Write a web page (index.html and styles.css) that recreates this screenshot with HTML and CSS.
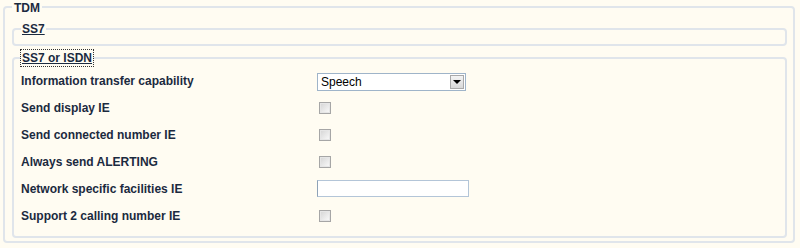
FILE: index.html
```html
<!DOCTYPE html>
<html lang="en">
  <head>
    <meta charset="UTF-8" />
    <title>TDM</title>
    <link rel="stylesheet" href="styles.css">
  </head>
  <body>
    <fieldset class="group">
      <legend class="group-title">TDM</legend>

      <fieldset class="section">
        <legend><a href="#" class="section-link">SS7</a></legend>
      </fieldset>

      <fieldset class="section">
        <legend><a href="#" class="section-link focused">SS7 or ISDN</a></legend>
        <div class="form-grid">
          <label class="field-label">Information transfer capability</label>
          <div class="field">
            <div class="select">
              <span class="select-value">Speech</span>
              <span class="select-btn"><span class="arrow"></span></span>
            </div>
          </div>

          <label class="field-label">Send display IE</label>
          <div class="field"><input type="checkbox" class="check" /></div>

          <label class="field-label">Send connected number IE</label>
          <div class="field"><input type="checkbox" class="check" /></div>

          <label class="field-label">Always send ALERTING</label>
          <div class="field"><input type="checkbox" class="check" /></div>

          <label class="field-label">Network specific facilities IE</label>
          <div class="field"><input type="text" class="text-input" /></div>

          <label class="field-label">Support 2 calling number IE</label>
          <div class="field"><input type="checkbox" class="check" /></div>
        </div>
      </fieldset>
    </fieldset>
  </body>
</html>
```

FILE: styles.css
```css
body {
  margin: 0;
  background: #fffcf2;
  font-family: "Liberation Sans", Arial, sans-serif;
  font-size: 12px;
  color: #1b2a3f;
}

fieldset {
  border: 2px solid #e0e5eb;
  border-radius: 4px;
  min-width: 0;
}

.group {
  margin: -1px 5px 5px 3px;
  padding: 6px 6px 4px 7px;
  height: 244px;
  box-sizing: border-box;
}

.group-title {
  padding: 3px 2px 0;
  font-weight: bold;
  line-height: 13px;
  color: #1b2a3f;
}

.section {
  margin: 0 0 4px 0;
  padding: 0 6px 7px 6px;
}

.section legend {
  padding: 0;
  margin-left: 1px;
  line-height: 16px;
}

.section-link {
  display: inline-block;
  padding: 0 1px;
  font-weight: bold;
  color: #1b2a3f;
  text-decoration: underline;
}

.focused {
  outline: 1px dotted #333;
}

.form-grid {
  display: grid;
  grid-template-columns: 297px auto;
  grid-auto-rows: 27px;
  padding-top: 1px;
}

.field-label {
  display: flex;
  align-items: center;
  font-weight: bold;
  padding-left: 1px;
}

.field {
  display: flex;
  align-items: center;
}

.select {
  display: flex;
  align-items: center;
  width: 149px;
  height: 18px;
  box-sizing: border-box;
  border: 1px solid #9fb4c9;
  background: #fff;
  margin-top: 2px;
}

.select-value {
  flex: 1;
  padding-left: 3px;
  color: #000;
}

.select-btn {
  display: flex;
  align-items: center;
  justify-content: center;
  width: 14px;
  height: 14px;
  margin-right: 1px;
  box-sizing: border-box;
  border: 1px solid #a9a9a9;
  background: linear-gradient(#f4f4f4, #d8d8d8);
}

.arrow {
  width: 0;
  height: 0;
  border-left: 4px solid transparent;
  border-right: 4px solid transparent;
  border-top: 4px solid #000;
}

.check {
  appearance: none;
  -webkit-appearance: none;
  margin: 0 0 0 2px;
  width: 12px;
  height: 12px;
  border: 1px solid #a6a6a6;
  box-shadow: inset 0 0 0 1px #e6e6e6;
  background: linear-gradient(135deg, #d4d4d4, #fbfbfb);
}

.text-input {
  margin: 0;
  padding: 0;
  width: 152px;
  height: 17px;
  box-sizing: border-box;
  border: 1px solid #b3c5d8;
  border-left-color: #8ea2b7;
  background: #fff;
}
```
